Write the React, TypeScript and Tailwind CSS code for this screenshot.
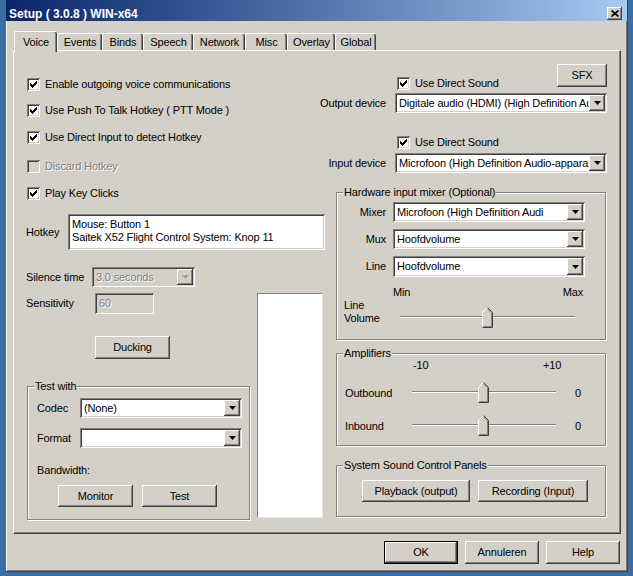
import React from "react";

const RAISED =
  "bg-[#d4d0c8] shadow-[inset_-1px_-1px_#404040,inset_1px_1px_#ffffff,inset_-2px_-2px_#808080,inset_2px_2px_#d4d0c8]";
const SUNKEN =
  "shadow-[inset_1px_1px_#808080,inset_-1px_-1px_#ffffff,inset_2px_2px_#404040,inset_-2px_-2px_#d4d0c8]";
const DIS = "text-[#808080] [text-shadow:1px_1px_0_#ffffff]";

function CheckMark() {
  const cols = [2, 3, 4, 3, 2, 1, 0];
  return (
    <svg width="7" height="7" viewBox="0 0 7 7" className="block">
      {cols.map((y, x) => (
        <rect key={x} x={x} y={y} width="1" height="3" fill="#000" />
      ))}
    </svg>
  );
}

function Box({ checked = true, disabled = false }: { checked?: boolean; disabled?: boolean }) {
  return (
    <span
      className={`w-[13px] h-[13px] shrink-0 flex items-center justify-center ${
        disabled ? "bg-[#d4d0c8]" : "bg-white"
      } ${SUNKEN}`}
    >
      {checked && <CheckMark />}
    </span>
  );
}

function CheckRow({
  label,
  checked = true,
  disabled = false,
  className = "",
}: {
  label: string;
  checked?: boolean;
  disabled?: boolean;
  className?: string;
}) {
  return (
    <div className={`flex items-center h-[16px] ${className}`}>
      <Box checked={checked} disabled={disabled} />
      <span className={`ml-[5px] whitespace-nowrap ${disabled ? DIS : ""}`}>{label}</span>
    </div>
  );
}

function Combo({
  text,
  className = "",
  disabled = false,
}: {
  text: string;
  className?: string;
  disabled?: boolean;
}) {
  return (
    <div
      className={`shrink-0 min-w-0 overflow-hidden flex p-[2px] ${disabled ? "bg-[#d4d0c8]" : "bg-white"} ${SUNKEN} ${className}`}
    >
      <span
        className={`flex-1 min-w-0 overflow-hidden whitespace-nowrap pl-[2px] flex items-center ${
          disabled ? DIS : ""
        }`}
      >
        {text}
      </span>
      <span className={`w-[16px] shrink-0 flex items-center justify-center ${RAISED}`}>
        <svg width="7" height="4" viewBox="0 0 7 4" className="block">
          <path d="M0 0H7L3.5 4Z" fill={disabled ? "#a0a0a0" : "#000"} />
        </svg>
      </span>
    </div>
  );
}

function Btn({
  children,
  className = "",
  def = false,
}: {
  children: React.ReactNode;
  className?: string;
  def?: boolean;
}) {
  if (def) {
    return (
      <div className={`border border-black flex ${className}`}>
        <div className={`flex-1 flex items-center justify-center ${RAISED}`}>{children}</div>
      </div>
    );
  }
  return (
    <div className={`flex items-center justify-center whitespace-nowrap ${RAISED} ${className}`}>
      {children}
    </div>
  );
}

function Group({
  label,
  className = "",
  children,
}: {
  label: string;
  className?: string;
  children: React.ReactNode;
}) {
  return (
    <div
      className={`relative flex flex-col border border-[#808080] shadow-[1px_1px_0_#ffffff,inset_1px_1px_0_#ffffff] ${className}`}
    >
      <span className="absolute -top-[8px] left-[6px] bg-[#d4d0c8] px-[1px] leading-[14px] whitespace-nowrap">
        {label}
      </span>
      {children}
    </div>
  );
}

function Thumb({ className = "" }: { className?: string }) {
  return (
    <svg width="11" height="21" viewBox="0 0 11 21" className={`absolute top-0 ${className}`}>
      <path d="M0 5.5L5.5 0L11 5.5V21H0Z" fill="#d4d0c8" />
      <path d="M0.5 20V5.5L5.5 0.5" stroke="#ffffff" fill="none" />
      <path d="M5.5 0.5L10.5 5.5V20.5H0.5" stroke="#404040" fill="none" />
      <path d="M5.5 1.9L9.5 5.9V19.5H1.5" stroke="#808080" fill="none" />
    </svg>
  );
}

function Slider({ className = "", thumb = "" }: { className?: string; thumb?: string }) {
  return (
    <div className={`relative h-[21px] shrink-0 ${className}`}>
      <div className="absolute left-0 right-0 top-[9px] h-[2px] border-t border-t-[#808080] border-b border-b-white" />
      <Thumb className={thumb} />
    </div>
  );
}

const TABS: { label: string; w: string; active?: boolean }[] = [
  { label: "Voice", w: "w-[43px]", active: true },
  { label: "Events", w: "w-[45px]" },
  { label: "Binds", w: "w-[41px]" },
  { label: "Speech", w: "w-[50px]" },
  { label: "Network", w: "w-[52px]" },
  { label: "Misc", w: "w-[42px]" },
  { label: "Overlay", w: "w-[48px]" },
  { label: "Global", w: "w-[41px]" },
];

export default function App() {
  return (
    <div className="w-[633px] h-[576px] overflow-hidden bg-[#3a6ea5] pl-[6px] pr-[5px] pb-[4px] flex font-['Liberation_Sans',Arial,sans-serif] text-[11px] leading-[13px] tracking-[-0.15px] text-black">
      <div className="w-[622px] h-[572px] bg-[#d4d0c8] flex flex-col shadow-[inset_-1px_-1px_#404040,inset_1px_0_#ffffff,inset_-2px_-2px_#808080]">
        {/* Title bar */}
        <div className="h-[21px] shrink-0 flex items-start bg-linear-to-r from-[#0a246a] to-[#a6caf0] pl-[3px] pr-[5px] mr-[1px]">
          <span className="mt-[7px] font-bold text-white text-[12px] leading-[14px] tracking-normal">
            Setup ( 3.0.8 ) WIN-x64
          </span>
          <div className={`ml-auto mt-[7px] w-[15px] h-[13px] flex items-center justify-center ${RAISED}`}>
            <svg width="8" height="7" viewBox="0 0 8 7" className="block">
              <path d="M0.5 0.5L7.5 6.5M7.5 0.5L0.5 6.5" stroke="#000" strokeWidth="1.7" />
            </svg>
          </div>
        </div>

        {/* Tabs */}
        <div className="mt-[10px] ml-[8px] h-[19px] flex items-end">
          {TABS.map((t) => (
            <div
              key={t.label}
              className={`${t.w} shrink-0 flex items-center justify-center pt-[1px] border-l border-t border-white rounded-t-[2px] shadow-[inset_-1px_0_#404040,inset_-2px_0_#808080] ${
                t.active ? "h-[21px] -mb-[2px] relative z-10 bg-[#d4d0c8]" : "h-[17px]"
              }`}
            >
              {t.label}
            </div>
          ))}
        </div>

        {/* Pane */}
        <div className="ml-[7px] w-[608px] h-[484px] shrink-0 flex border border-white border-r-[#404040] border-b-[#404040] shadow-[inset_-1px_-1px_#808080]">
          {/* Left column */}
          <div className="ml-[12px] w-[299px] shrink-0 flex flex-col">
            <CheckRow className="mt-[25px] ml-[1px]" label="Enable outgoing voice communications" />
            <CheckRow className="mt-[10px] ml-[1px]" label="Use Push To Talk Hotkey ( PTT Mode )" />
            <CheckRow className="mt-[11px] ml-[1px]" label="Use Direct Input to detect Hotkey" />
            <CheckRow className="mt-[13px] ml-[1px]" label="Discard Hotkey" checked={false} disabled />
            <CheckRow className="mt-[11px] ml-[1px]" label="Play Key Clicks" />

            <div className="mt-[13px] h-[36px] flex items-center">
              <span className="w-[42px] shrink-0">Hotkey</span>
              <div className={`flex-1 h-full bg-white ${SUNKEN} pl-[4px] pt-[4px] whitespace-nowrap`}>
                <div>Mouse: Button 1</div>
                <div>Saitek X52 Flight Control System: Knop 11</div>
              </div>
            </div>

            <div className="mt-[17px] flex">
              <div className="w-[231px] shrink-0 flex flex-col">
                <div className="h-[20px] flex items-center">
                  <span className="w-[66px] shrink-0">Silence time</span>
                  <Combo text="3.0 seconds" disabled className="w-[103px] h-[20px]" />
                </div>
                <div className="mt-[6px] h-[21px] flex items-center">
                  <span className="w-[69px] shrink-0">Sensitivity</span>
                  <div className={`w-[59px] h-[21px] ${SUNKEN} pl-[4px] flex items-center ${DIS}`}>60</div>
                </div>
                <Btn className="mt-[22px] ml-[69px] w-[75px] h-[23px]">Ducking</Btn>

                <Group label="Test with" className="mt-[27px] ml-[1px] w-[223px] h-[134px]">
                  <div className="mt-[11px] h-[20px] flex items-center">
                    <span className="w-[52px] shrink-0 pl-[9px]">Codec</span>
                    <Combo text="(None)" className="w-[162px] h-[20px]" />
                  </div>
                  <div className="mt-[10px] h-[20px] flex items-center">
                    <span className="w-[52px] shrink-0 pl-[9px]">Format</span>
                    <Combo text="" className="w-[162px] h-[20px]" />
                  </div>
                  <div className="mt-[15px] h-[14px] pl-[9px] flex items-center">Bandwidth:</div>
                  <div className="mt-[8px] flex">
                    <Btn className="ml-[30px] w-[75px] h-[22px]">Monitor</Btn>
                    <Btn className="ml-[9px] w-[75px] h-[22px]">Test</Btn>
                  </div>
                </Group>
              </div>
              <div className="mt-[26px] w-[66px] h-[225px] bg-white border border-[#808080] border-r-[#e8e6e2] border-b-[#e8e6e2]" />
            </div>
          </div>

          {/* Right column */}
          <div className="ml-[11px] w-[271px] shrink-0 flex flex-col">
            <div className="mt-[13px] h-[23px] flex items-start">
              <CheckRow className="mt-[11px] ml-[61px]" label="Use Direct Sound" />
              <Btn className="ml-auto w-[50px] h-[23px]">SFX</Btn>
            </div>
            <div className="mt-[6px] h-[20px] flex items-center">
              <span className="w-[59px] shrink-0 pr-[9px] flex justify-end whitespace-nowrap">Output device</span>
              <Combo text="Digitale audio (HDMI) (High Definition Au" className="w-[212px] h-[20px]" />
            </div>
            <CheckRow className="mt-[21px] ml-[61px]" label="Use Direct Sound" />
            <div className="mt-[3px] h-[20px] flex items-center">
              <span className="w-[59px] shrink-0 pr-[9px] flex justify-end whitespace-nowrap">Input device</span>
              <Combo text="Microfoon (High Definition Audio-appara" className="w-[212px] h-[20px]" />
            </div>

            <Group label="Hardware input mixer (Optional)" className="mt-[19px] w-[270px] h-[148px]">
              <div className="mt-[9px] h-[20px] flex items-center">
                <span className="w-[56px] shrink-0 pr-[7px] text-right">Mixer</span>
                <Combo text="Microfoon (High Definition Audi" className="w-[192px] h-[20px]" />
              </div>
              <div className="mt-[7px] h-[20px] flex items-center">
                <span className="w-[56px] shrink-0 pr-[7px] text-right">Mux</span>
                <Combo text="Hoofdvolume" className="w-[192px] h-[20px]" />
              </div>
              <div className="mt-[7px] h-[21px] flex items-center">
                <span className="w-[56px] shrink-0 pr-[7px] text-right">Line</span>
                <Combo text="Hoofdvolume" className="w-[192px] h-[21px]" />
              </div>
              <div className="mt-[8px] ml-[56px] w-[190px] h-[14px] flex items-center justify-between">
                <span>Min</span>
                <span>Max</span>
              </div>
              <div className="-mt-[1px] flex">
                <div className="w-[63px] shrink-0 pl-[7px] pt-[1px]">
                  <div>Line</div>
                  <div>Volume</div>
                </div>
                <Slider className="mt-[9px] w-[175px]" thumb="left-[82px]" />
              </div>
            </Group>

            <Group label="Amplifiers" className="mt-[13px] w-[270px] h-[93px]">
              <div className="mt-[4px] ml-[76px] h-[14px] flex items-center">
                <span className="w-[130px] shrink-0">-10</span>
                <span>+10</span>
              </div>
              <div className="mt-[10px] h-[21px] flex items-center">
                <span className="w-[75px] shrink-0 pl-[8px] pt-[2px]">Outbound</span>
                <Slider className="w-[144px]" thumb="left-[66px]" />
                <span className="ml-[19px] pt-[2px]">0</span>
              </div>
              <div className="mt-[12px] h-[21px] flex items-center">
                <span className="w-[75px] shrink-0 pl-[8px] pt-[2px]">Inbound</span>
                <Slider className="w-[144px]" thumb="left-[66px]" />
                <span className="ml-[19px] pt-[2px]">0</span>
              </div>
            </Group>

            <Group label="System Sound Control Panels" className="mt-[19px] w-[270px] h-[52px]">
              <div className="mt-[14px] flex">
                <Btn className="ml-[25px] w-[108px] h-[22px]">Playback (output)</Btn>
                <Btn className="ml-[8px] w-[110px] h-[22px]">Recording (Input)</Btn>
              </div>
            </Group>
          </div>
        </div>

        {/* Bottom buttons */}
        <div className="mt-[7px] flex justify-end pr-[8px]">
          <Btn def className="w-[74px] h-[23px]">OK</Btn>
          <Btn className="ml-[7px] w-[74px] h-[23px]">Annuleren</Btn>
          <Btn className="ml-[7px] w-[74px] h-[23px]">Help</Btn>
        </div>
      </div>
    </div>
  );
}
